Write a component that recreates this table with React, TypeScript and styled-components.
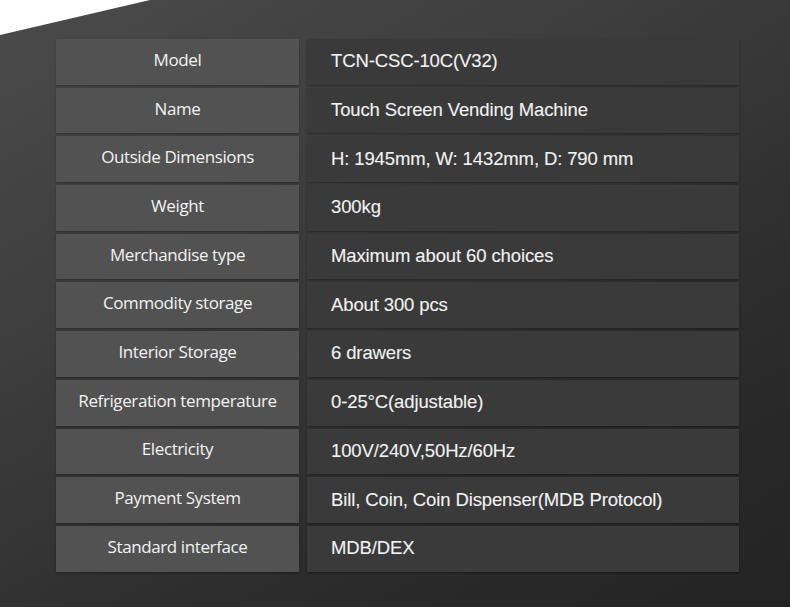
import React from "react"
import styled, { createGlobalStyle } from "styled-components"

const GlobalStyle = createGlobalStyle`
  html, body {
    margin: 0;
    padding: 0;
    background: #2a2a2a;
  }
`

const specs: [string, string][] = [
  ["Model", "TCN-CSC-10C(V32)"],
  ["Name", "Touch Screen Vending Machine"],
  ["Outside Dimensions", "H: 1945mm, W: 1432mm, D: 790 mm"],
  ["Weight", "300kg"],
  ["Merchandise type", "Maximum about 60 choices"],
  ["Commodity storage", "About 300 pcs"],
  ["Interior Storage", "6 drawers"],
  ["Refrigeration temperature", "0-25°C(adjustable)"],
  ["Electricity", "100V/240V,50Hz/60Hz"],
  ["Payment System", "Bill, Coin, Coin Dispenser(MDB Protocol)"],
  ["Standard interface", "MDB/DEX"],
]

const App = () => {
  return (
    <>
      <GlobalStyle />
      <Page>
        <Corner viewBox="0 0 150 35" preserveAspectRatio="none">
          <polygon points="0,0 150,0 0,35" fill="#ffffff" />
        </Corner>
        <SpecTable>
          {specs.map(([label, value]) => (
            <React.Fragment key={label}>
              <LabelCell>{label}</LabelCell>
              <ValueCell>{value}</ValueCell>
            </React.Fragment>
          ))}
        </SpecTable>
      </Page>
    </>
  )
}

const Page = styled.div`
  position: relative;
  width: 790px;
  height: 607px;
  overflow: hidden;
  box-sizing: border-box;
  padding: 39px 0 0 56px;
  background: linear-gradient(150deg, #4b4b4b 0%, #3d3d3d 35%, #2c2c2c 70%, #232323 100%);
`

const Corner = styled.svg`
  position: absolute;
  left: 0;
  top: 0;
  width: 150px;
  height: 35px;
`

const SpecTable = styled.div`
  display: grid;
  grid-template-columns: 243px 432px;
  grid-auto-rows: 45.7px;
  column-gap: 8px;
  row-gap: 3px;
  width: 683px;
`

const Cell = styled.div`
  display: flex;
  align-items: center;
  box-sizing: border-box;
  color: #f2f2f2;
  box-shadow: 0 1px 2px rgba(0, 0, 0, 0.35);
`

const LabelCell = styled(Cell)`
  justify-content: center;
  background: #525252;
  padding-bottom: 5px;
  font-family: "Open Sans", "Noto Sans", sans-serif;
  font-size: 17px;
  letter-spacing: -0.4px;
`

const ValueCell = styled(Cell)`
  background: #3a3a3a;
  padding: 0 0 1px 24px;
  font-family: "Liberation Sans", Arial, sans-serif;
  font-size: 18.5px;
  letter-spacing: -0.12px;
  -webkit-text-stroke: 0.1px #f2f2f2;
`

export default App
